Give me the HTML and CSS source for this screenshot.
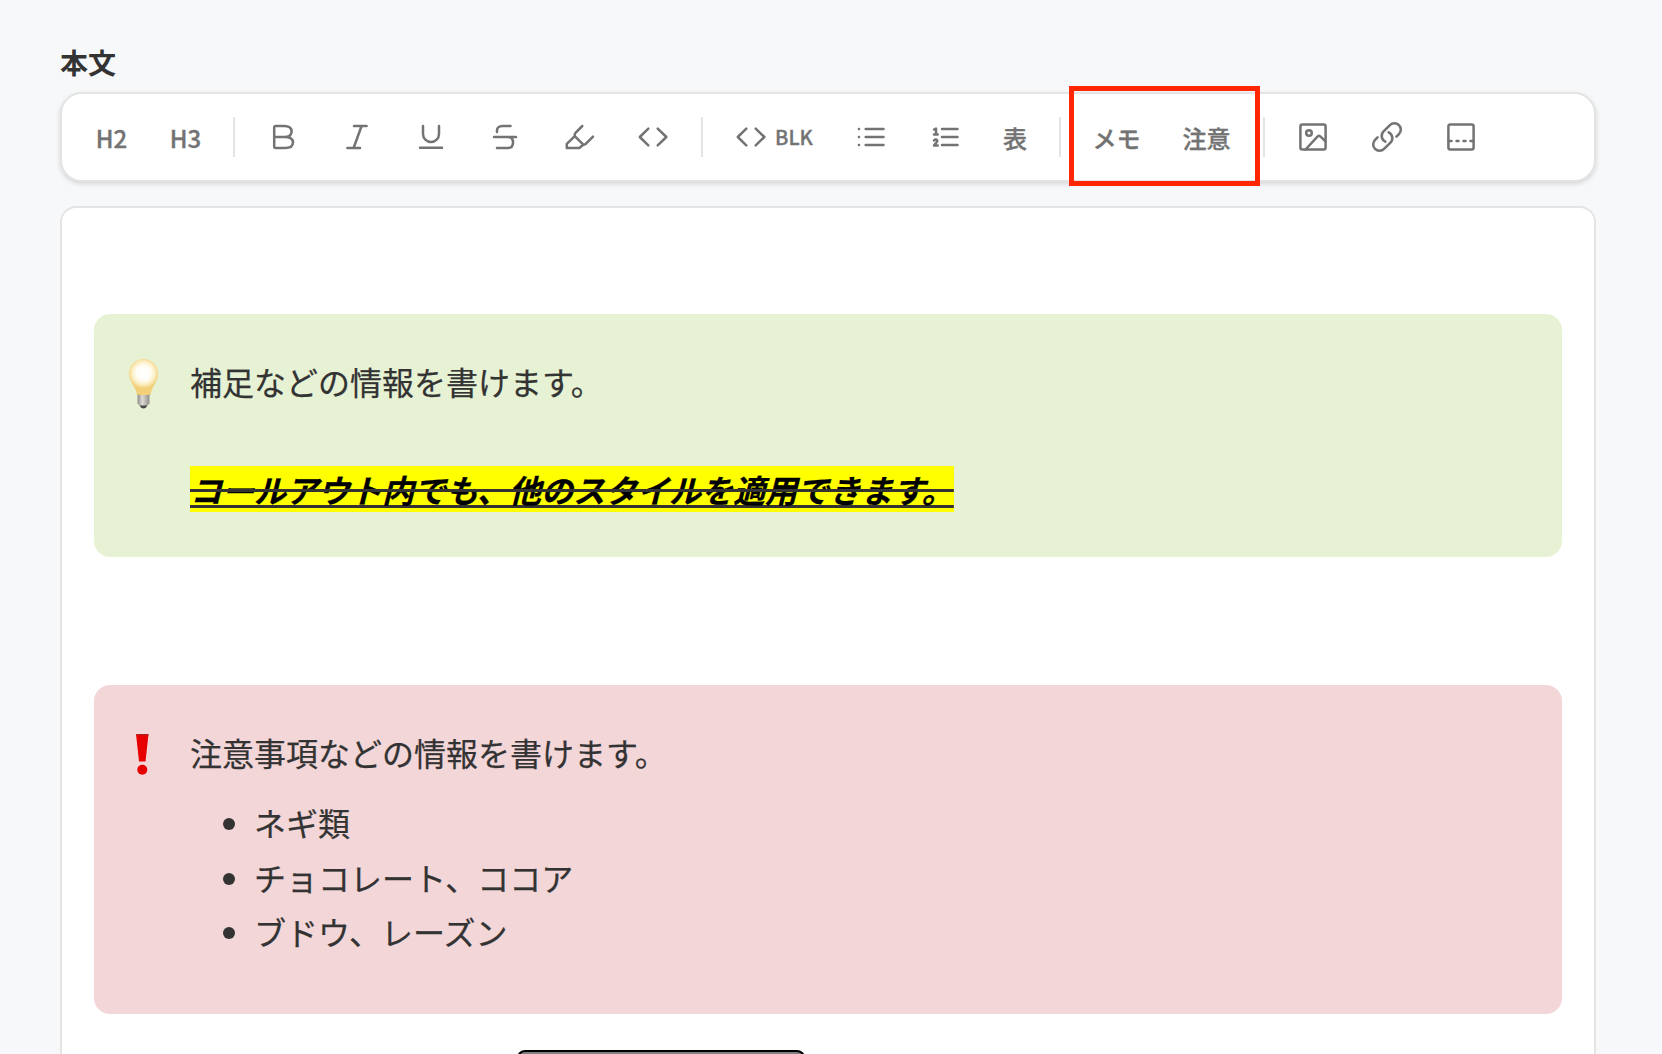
FILE: index.html
```html
<!DOCTYPE html>
<html lang="ja">
<head>
<meta charset="utf-8">
<title>本文</title>
<link rel="stylesheet" href="styles.css">
</head>
<body>
<main class="page">
  <h1 class="label">本文</h1>
  <div class="toolbar">
    <button class="tool"><span class="text">H2</span></button>
    <button class="tool"><span class="text">H3</span></button>
    <span class="sep"></span>
    <button class="tool"><svg class="icon" viewBox="0 0 32 32"><path d="M17.5 16H7.2V6.4Q7.2 5 8.6 5H17C22.5 5 24.6 7.2 24.6 10.5S22.500 16 17.500 16C23.500 16 26 18 26 21.500S23.500 27 18 27H8.600Q7.200 27 7.200 25.600V16"/></svg></button>
    <button class="tool"><svg class="icon" viewBox="0 0 32 32"><path d="M13 5H25.600M6.400 27H19M20.600 5L12.600 27"/></svg></button>
    <button class="tool"><svg class="icon" viewBox="0 0 32 32"><path d="M8 5V13a8 8 0 0 0 16 0V5M5 26.700H27"/></svg></button>
    <button class="tool"><svg class="icon" viewBox="0 0 32 32"><path d="M21.500 5H13.500C10 5 8 7 8 9.500V11M5 16H27M19 16C22.500 16 24 18 24 21.500S22 27 19 27H8"/></svg></button>
    <button class="tool"><svg class="icon" viewBox="0 0 32 32"><path d="M19.300 5L12.500 11.800Q11.300 13.200 11.800 15.200L3.800 22.800V27H16.300L20.300 23.700L11.800 15.200M20.300 23.700Q21.800 24 23 22.700L30 15.700"/></svg></button>
    <button class="tool"><svg class="icon" viewBox="0 0 32 32"><path d="M11.300 7.700L2.800 16L11.300 24.300M20.700 7.700L29.400 16L20.700 24.300"/></svg></button>
    <span class="sep"></span>
    <button class="tool tool-block"><svg class="icon" viewBox="0 0 32 32"><path d="M11.300 7.700L2.800 16L11.300 24.300M20.700 7.700L29.400 16L20.700 24.300"/></svg><span class="blk">BLK</span></button>
    <button class="tool"><svg class="icon" viewBox="0 0 32 32"><path d="M10.700 8H28.500M10.700 16H28.500M10.700 24H28.500M3.900 8H4M3.900 16H4M3.900 24H4"/></svg></button>
    <button class="tool"><svg class="icon" viewBox="0 0 32 32"><path d="M13 8H28.500M13 16H28.500M13 24H28.500M5 8.500L7 7.500V13.500M5 13.500H8.700M5 19.500Q5.500 18.300 7 18.500Q9 19.300 7.800 21L5 24.500H8.700"/></svg></button>
    <button class="tool tool-table"><span class="text">表</span></button>
    <span class="sep"></span>
    <div class="marked">
      <button class="tool tool-memo"><span class="text">メモ</span></button>
      <button class="tool tool-alert"><span class="text">注意</span></button>
      <div class="highlight"></div>
    </div>
    <span class="sep"></span>
    <button class="tool"><svg class="icon" viewBox="0 0 32 32"><rect x="3.400" y="3.400" width="25.200" height="25.200" rx="2"/><circle cx="12" cy="12" r="2.800"/><path d="M8.500 28.500L20.700 15.400Q22 14.200 23.300 15.400L28.500 20.300"/></svg></button>
    <button class="tool"><svg class="icon link" viewBox="0 0 24 24"><path d="M13.190 8.688a4.500 4.500 0 0 1 1.242 7.244l-4.500 4.500a4.500 4.500 0 0 1-6.364-6.364l1.757-1.757m13.350-.622 1.757-1.757a4.500 4.500 0 0 0-6.364-6.364l-4.500 4.500a4.500 4.500 0 0 0 1.242 7.244"/></svg></button>
    <button class="tool"><svg class="icon" viewBox="0 0 32 32"><rect x="3.400" y="3.400" width="25.200" height="25.200" rx="2"/><path d="M3.500 20H6.500M11.500 20H13.500M18.500 20H20.500M25.500 20H28.500"/></svg></button>
  </div>
  <div class="editor">
    <section class="callout memo">
      <svg class="mark" viewBox="0 0 34 56">
        <defs>
          <radialGradient id="glass" gradientUnits="userSpaceOnUse" cx="17.500" cy="19" r="15.500"><stop offset="0" stop-color="#fff"/><stop offset=".45" stop-color="#fffdf6"/><stop offset=".72" stop-color="#fdf0c8"/><stop offset="1" stop-color="#f2cf78"/></radialGradient>
          <linearGradient id="metal"><stop offset="0" stop-color="#8d8b83"/><stop offset=".4" stop-color="#dedbd6"/><stop offset="1" stop-color="#918e89"/></linearGradient>
        </defs>
        <path d="M3 19.500A14.500 14.500 0 0 1 32 19.500C32 29 25.500 32 24.500 41Q17.500 43 11 41C10 32 3 29 3 19.500Z" fill="url(#glass)"/>
        <path d="M11.500 40.500Q17.500 42 23.500 40.500V49.500L21 52Q17.500 54 14 52L11.500 49.500Z" fill="url(#metal)"/>
        <path d="M13.500 51.500H21.500Q20 54.500 17.500 54.500T13.500 51.500Z" fill="#494945"/>
      </svg>
      <div class="body">
        <p>補足などの情報を書けます。</p>
        <p class="blank"></p>
        <p class="styled"><u><s><mark>コールアウト内でも、他のスタイルを適用できます。</mark></s></u></p>
      </div>
    </section>
    <section class="callout alert">
      <svg class="mark" viewBox="0 0 34 56"><path d="M10 9H22.500L19.500 36.500H13Z" fill="#e60000"/><path d="M10 9H22.500L22.400 10.300H10.100Z" fill="#b32121"/><circle cx="16.300" cy="44.700" r="5" fill="#e60000"/></svg>
      <div class="body">
        <p>注意事項などの情報を書けます。</p>
        <ul>
          <li>ネギ類</li>
          <li>チョコレート、ココア</li>
          <li>ブドウ、レーズン</li>
        </ul>
      </div>
    </section>
    <div class="popover"></div>
  </div>
</main>
</body>
</html>
```
FILE: styles.css
```css
* { box-sizing: border-box; }
body {
  margin: 0;
  height: 1054px;
  overflow: hidden;
  background: #f7f8fa;
  color: #333;
  font-family: "Noto Sans CJK JP", sans-serif;
}
.page { display: flex; flex-direction: column; height: 1054px; padding: 40px 66px 0 60px; }
.label { flex: none; margin: 0; height: 52px; font-size: 28px; line-height: 44px; font-weight: 700; }
.toolbar {
  display: flex;
  flex: none;
  align-items: center;
  height: 90px;
  padding: 0 12px 1px;
  background: #fff;
  border: 2px solid #e4e4e4;
  border-radius: 22px;
  box-shadow: 0 2px 5px rgba(0, 0, 0, .14);
}
.tool {
  display: flex;
  flex: none;
  align-items: center;
  justify-content: center;
  width: 74px;
  height: 66px;
  padding: 0;
  border: 0;
  background: none;
  color: #737373;
  font: 500 24px/36px "Noto Sans CJK JP", sans-serif;
  -webkit-text-stroke: .35px #737373;
}
.text { padding: 2px 0 0 1px; }
.tool-block { width: 120px; gap: 8px; }
.tool-table { width: 66px; }
.tool-table .text { padding-left: 0; }
.tool-memo { width: 88px; }
.tool-alert { width: 92px; }
.blk { font-size: 20px; }
.icon {
  flex: none;
  width: 32px;
  height: 32px;
  overflow: visible;
  fill: none;
  stroke: #737373;
  stroke-width: 2.5;
  stroke-linecap: round;
  stroke-linejoin: round;
}
.link { width: 34px; height: 34px; stroke-width: 1.8; }
.sep { flex: none; width: 2px; height: 40px; margin: 0 11px; background: #e4e4e4; }
.marked { position: relative; display: flex; }
.highlight {
  position: absolute;
  left: -3px;
  top: -18px;
  width: 191px;
  height: 100px;
  border: 5px solid #ff2600;
}
.editor {
  flex: 1;
  min-height: 0;
  overflow: hidden;
  margin-top: 24px;
  padding: 106px 32px 0;
  background: #fff;
  border: 2px solid #e4e4e4;
  border-bottom: 0;
  border-radius: 16px 16px 0 0;
}
.callout { display: flex; gap: 30px; padding: 38px 32px; border-radius: 16px; }
.memo { height: 243px; background: #e7f2d5; }
.alert { height: 329px; margin-top: 128px; background: #f3d6d8; }
.mark { flex: none; width: 34px; height: 56px; margin-top: 2px; }
.body { font-size: 32px; line-height: 58px; -webkit-text-stroke: .25px; }
.body p { margin: 0; }
.body .blank { height: 50px; }
.styled { font-weight: 700; font-style: italic; }
mark { background: #ff0; color: #000; }
ul { margin: 14px 0 0; padding-left: 64px; }
li { line-height: 54.600px; }
.popover {
  width: 288px;
  height: 9px;
  margin: 36px 0 0 423px;
  background: #808080;
  border: 2px solid #000;
  border-bottom: 0;
  border-radius: 8px 8px 0 0;
}
```
